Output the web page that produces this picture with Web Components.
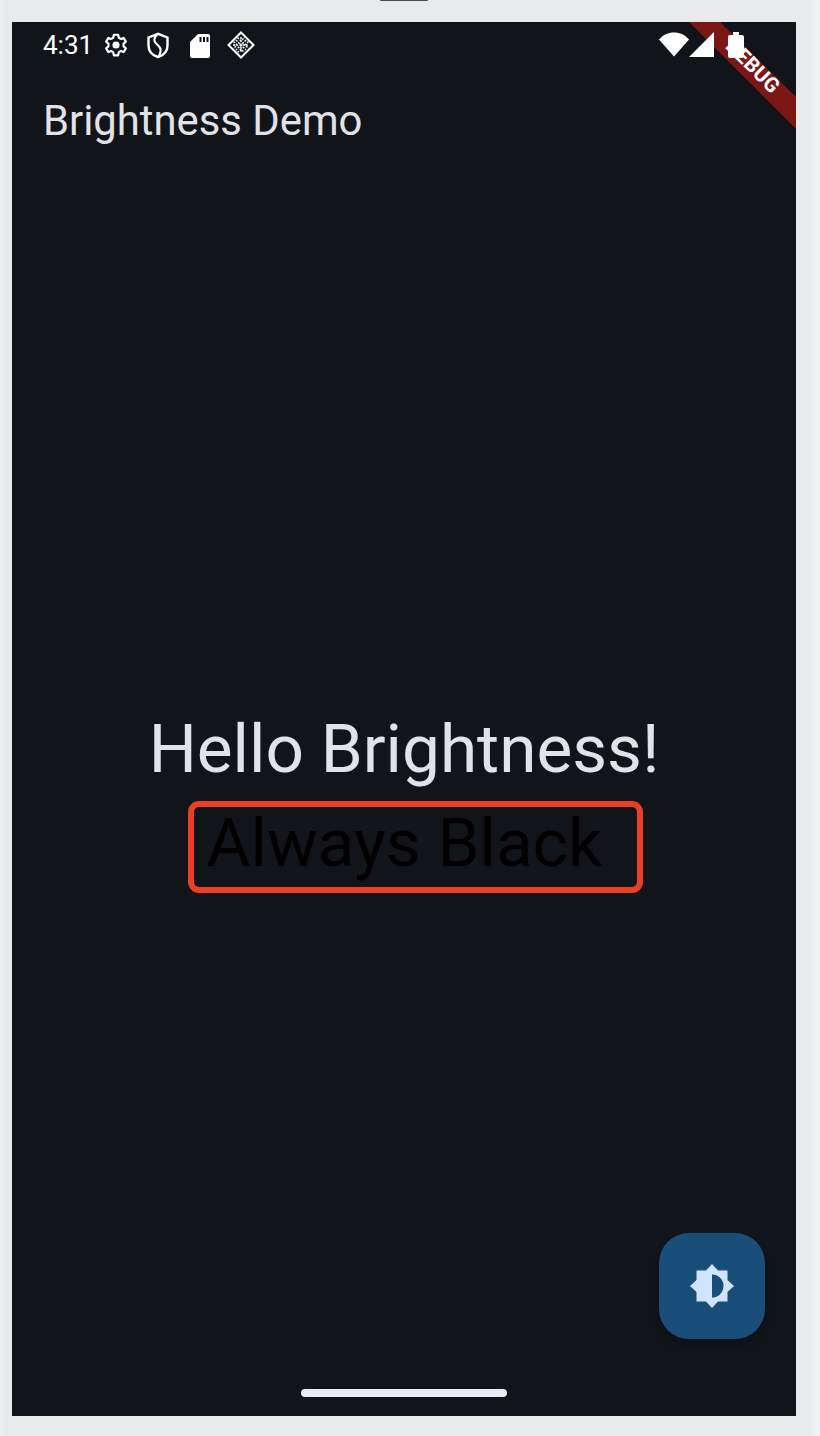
<!DOCTYPE html>
<html><head><meta charset="utf-8">
<style>html,body{margin:0;padding:0;background:#e9eaec}body{width:820px;height:1436px;overflow:hidden;font-family:Roboto,sans-serif}</style>
</head><body>
<device-frame>
  <phone-status slot="status"></phone-status>
  <app-bar slot="bar">Brightness Demo</app-bar>
  <hello-body slot="body"></hello-body>
  <bright-fab slot="fab"></bright-fab>
  <debug-banner slot="banner"></debug-banner>
</device-frame>
<script>
function def(name,html){customElements.define(name,class extends HTMLElement{constructor(){super();this.attachShadow({mode:'open'}).innerHTML=html}})}
def('device-frame',`<style>
:host{display:block;width:820px;height:1436px;box-sizing:border-box;padding:22px 24px 20px 12px;position:relative;background:linear-gradient(90deg,#eeeff1 0,#e9eaec 6px,#e9eaec 808px,#eff0f2 814px)}
.notch{position:absolute;left:380px;top:0;width:48px;height:1px;background:#4a4a4c;border-radius:0 0 6px 6px}
.screen{position:relative;width:784px;height:1394px;background:#11151a;display:flex;flex-direction:column;overflow:hidden}
.pill{position:absolute;left:289px;top:1367px;width:206px;height:8px;border-radius:4px;background:#ebecee}
</style><div class="notch"></div><div class="screen"><slot name="status"></slot><slot name="bar"></slot><slot name="body"></slot><slot name="fab"></slot><slot name="banner"></slot><div class="pill"></div></div>`);
def('phone-status',`<style>
:host{display:flex;align-items:center;height:46px;padding:0 0 0 31px;color:#fff;font:400 26px/1 Roboto,sans-serif;flex:none;position:relative}
.t{width:49px;white-space:nowrap;margin-right:11px}
svg{display:block;flex:none}
.r{position:absolute;left:646px;top:0;height:48px;width:100px;z-index:3}
.r svg{position:absolute}
</style><span class="t">4:31</span>
<svg style="margin-right:17px" width="26" height="26" viewBox="0 0 24 24" fill="none" stroke="#fff" stroke-width="2"><path stroke-linejoin="round" d="M10 2.500h4l.6 2.900 1.700 1 2.800-.9 2 3.400-2.200 2a6 6 0 0 1 0 2.200l2.200 2-2 3.400-2.800-.9-1.700 1-.6 2.900h-4l-.6-2.900-1.700-1-2.800.9-2-3.400 2.200-2a6 6 0 0 1 0-2.200l-2.200-2 2-3.400 2.800.9 1.700-1z"/><circle cx="12" cy="12" r="2.800" fill="#fff" stroke-width="1"/></svg>
<svg style="margin-right:19px" width="24" height="27" viewBox="0 0 24 27" fill="none" stroke="#fff" stroke-width="2.400"><path d="M12 1.800 2.500 5.500v8c0 5.600 3.800 9.800 9.500 11.700 5.700-1.900 9.500-6.100 9.500-11.700v-8z"/><path d="M11 2.500C7.500 6.500 7.500 9.500 10.500 12c3 2.500 6.500 5 2 12.500" stroke-width="2.200"/></svg>
<svg style="margin-right:16px" width="22" height="25" viewBox="0 0 22 25"><path fill="#fff" fill-rule="evenodd" d="M9 1h10a2 2 0 0 1 2 2v20a2 2 0 0 1-2 2H3a2 2 0 0 1-2-2V9zM10.500 4v5h2V4zM14 4v5h2V4zM17.500 4v5h2V4z"/></svg>
<svg width="28" height="28" viewBox="0 0 28 28" fill="none" stroke="#fff"><path stroke-width="2" d="M14 1.500 26.500 14 14 26.500 1.500 14z"/><path stroke-width="1.500" d="M14 6v16M6 14h16M9 9l10 10M19 9 9 19M10.500 6.500 14 10l3.500-3.500M10.500 21.500 14 18l3.500 3.500M6.500 10.500 10 14l-3.500 3.500M21.500 10.500 18 14l3.500 3.500" stroke-dasharray="2 1.200"/></svg>
<div class="r">
<svg style="left:1px;top:10px" width="30" height="25" viewBox="0 0 30 25"><path fill="#fff" d="M0 7.500C4 3 9 .5 15 .5S26 3 30 7.500L15 24.500z"/></svg>
<svg style="left:31px;top:10px" width="26" height="25" viewBox="0 0 26 25"><path fill="#fff" d="M25 0v25H0z"/></svg>
<svg style="left:69px;top:10px" width="18" height="26" viewBox="0 0 18 26"><path fill="#fff" d="M6 0h6v3h3a2 2 0 0 1 2 2v19a2 2 0 0 1-2 2H3a2 2 0 0 1-2-2V5a2 2 0 0 1 2-2h3z"/></svg>
</div>`);
def('app-bar',`<style>:host{display:flex;align-items:center;box-sizing:border-box;height:98px;padding:8px 0 0 31px;color:#e2e3e8;font:400 41.800px/1 Roboto,sans-serif;flex:none}</style><slot></slot>`);
def('hello-body',`<style>
:host{flex:1;display:flex;flex-direction:column;align-items:center;justify-content:center;font:400 67.500px/78px Roboto,sans-serif;color:#e2e3e8;padding-top:20px}
.box{box-sizing:border-box;height:92px;width:455px;margin-top:13px;border:6px solid #ea3f26;border-radius:11px;color:#000;padding-left:13px;line-height:72px;margin-left:22px;white-space:nowrap}
.h{white-space:nowrap}
</style><div class="h">Hello Brightness!</div><div class="box">Always Black</div>`);
def('bright-fab',`<style>
:host{position:absolute;left:647px;top:1211px;width:106px;height:106px;border-radius:30px;background:#194e7a;display:flex;align-items:center;justify-content:center;box-shadow:0 6px 12px rgba(0,0,0,.3)}
</style><svg width="44" height="44" viewBox="0 0 44 44"><path fill="#d1e4ff" d="M22 0l6 6.500h9.500V16l6.500 6-6.500 6v9.500H28L22 44l-6-6.500H6.500V28L0 22l6.500-6V6.500H16z"/><path fill="#194e7a" d="M22 10.500a11.500 11.500 0 0 1 0 23z"/></svg>`);
def('debug-banner',`<style>
:host{position:absolute;right:0;top:0;width:110px;height:110px;z-index:2;pointer-events:none}
.b{position:absolute;inset:0;background:#7c1716;clip-path:polygon(3px 0,34px 0,110px 75px,110px 107px)}
.t{position:absolute;left:12px;top:33px;width:110px;text-align:center;transform:rotate(45deg);color:#fff;font:700 20.500px/22px Roboto,sans-serif;letter-spacing:.3px}
</style><div class="b"></div><div class="t">DEBUG</div>`);
</script>
</body></html>
